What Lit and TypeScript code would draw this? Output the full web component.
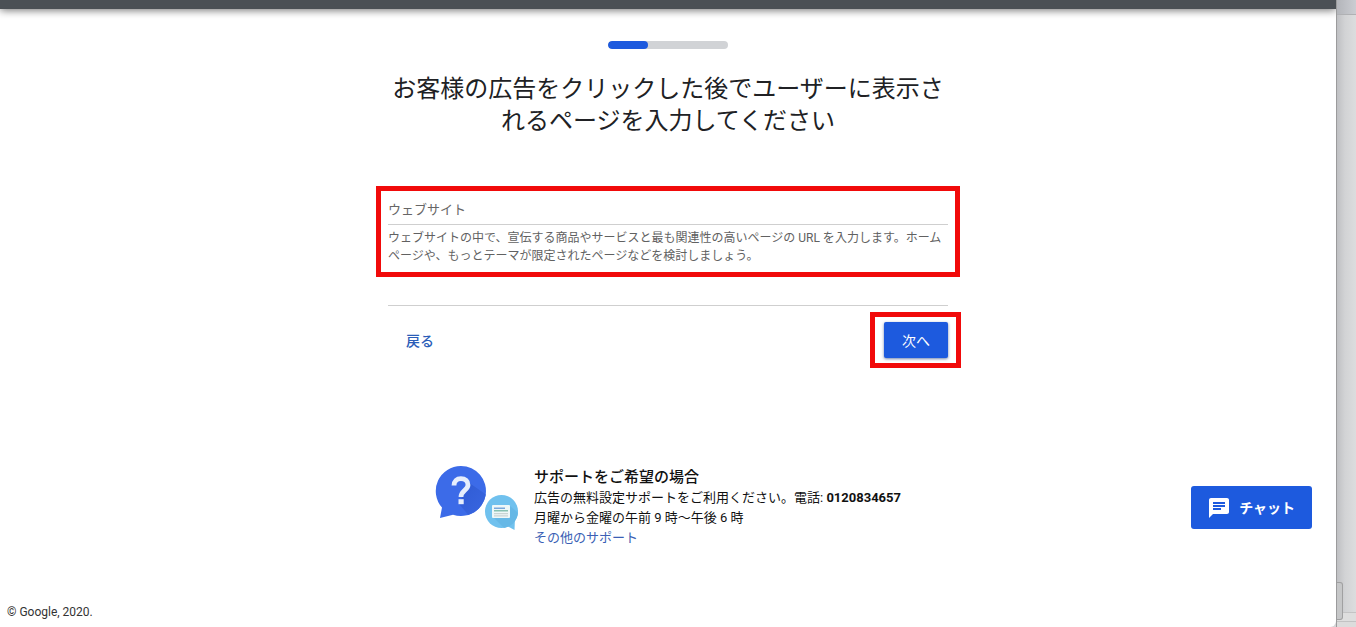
import { LitElement, html, css } from "lit";
import { customElement, property } from "lit/decorators.js";

@customElement("step-progress")
class StepProgress extends LitElement {
  @property({ type: Number }) value = 0;

  static styles = css`
    :host {
      display: block;
      width: 120px;
    }
    .track {
      height: 8px;
      border-radius: 4px;
      background: #d1d3d6;
      overflow: hidden;
    }
    .fill {
      height: 100%;
      border-radius: 4px;
      background: #1d5ade;
    }
  `;

  render() {
    return html`<div
      class="track"
      role="progressbar"
      aria-label="進行状況"
      aria-valuemin="0"
      aria-valuemax="100"
      aria-valuenow=${this.value}
    >
      <div class="fill" style="width:${this.value}%"></div>
    </div>`;
  }
}

@customElement("support-panel")
class SupportPanel extends LitElement {
  static styles = css`
    :host {
      display: flex;
      gap: 15px;
      color: #111;
    }
    .art {
      flex: none;
      width: 84px;
      height: 66px;
    }
    .title {
      margin: 0;
      padding-top: 1px;
      font-size: 15px;
      line-height: 22px;
      font-weight: 500;
    }
    .line {
      margin: 0;
      font-size: 13px;
      line-height: 20px;
    }
    .phone {
      font-weight: 700;
    }
    .more {
      color: #3b5fb5;
      text-decoration: none;
    }
  `;

  render() {
    return html`
      <svg class="art" viewBox="0 0 84 66" aria-hidden="true">
        <defs>
          <linearGradient id="shade" x1="0" y1="0" x2="1" y2="1">
            <stop offset="0" stop-color="#2f5bd3" />
            <stop offset="1" stop-color="#3a67e2" />
          </linearGradient>
          <clipPath id="big">
            <circle cx="26" cy="26" r="25" />
          </clipPath>
          <clipPath id="small">
            <circle cx="66.500" cy="46.500" r="16.500" />
          </clipPath>
        </defs>
        <path d="M26 1a25 25 0 1 1-8 48.700L5 53 7 42.500A25 25 0 0 1 26 1z" fill="#3c6be8" />
        <path d="M33 17l20 14v22H36L24 39l4-9z" fill="url(#shade)" clip-path="url(#big)" />
        <path
          d="M19 20.500c0-4.400 2.800-6.900 6.900-6.900 4.300 0 7.100 2.500 7.100 6.300 0 5.200-7 5.800-7 12.100"
          fill="none"
          stroke="#e6eefc"
          stroke-width="4.800"
        />
        <rect x="23.500" y="34.200" width="5.200" height="5" fill="#e6eefc" />
        <circle cx="66.500" cy="46.500" r="16.500" fill="#70c1ee" />
        <path d="M71 60.500l9-7.500-.5 12z" fill="#70c1ee" />
        <path d="M75 41l12 10v14H71L59 53z" fill="#66b8e6" clip-path="url(#small)" />
        <rect x="57" y="40" width="18" height="13" rx="1" fill="#eef7f8" />
        <path d="M59 43.200h11" stroke="#5b94d3" stroke-width="1.200" />
        <path d="M59 45.800h14" stroke="#6db3a0" stroke-width="1.200" />
        <path d="M59 48.600h14M59 50.800h14" stroke="#c9d4d3" stroke-width="1.200" />
      </svg>
      <div>
        <h2 class="title">サポートをご希望の場合</h2>
        <p class="line">
          広告の無料設定サポートをご利用ください。電話: <span class="phone">0120834657</span>
        </p>
        <p class="line">月曜から金曜の午前 9 時～午後 6 時</p>
        <p class="line"><a class="more" href="#support">その他のサポート</a></p>
      </div>
    `;
  }
}

@customElement("app-root")
class AppRoot extends LitElement {
  static styles = css`
    :host {
      display: grid;
      grid-template-columns: minmax(0, 1fr) 20px;
      min-height: 100vh;
      font-family: Roboto, "Noto Sans CJK JP", sans-serif;
      background: #d5d6d8;
    }
    * {
      box-sizing: border-box;
    }
    .window {
      position: relative;
      display: flex;
      flex-direction: column;
      background: #fff;
      border-bottom-right-radius: 6px;
      overflow: hidden;
    }
    .bar {
      height: 9px;
      background: #4b5055;
      box-shadow: 0 1px 8px rgba(0, 0, 0, 0.6);
    }
    .page {
      flex: 1;
      display: flex;
      flex-direction: column;
      align-items: center;
      padding-top: 32px;
    }
    .form {
      width: 100%;
      max-width: 560px;
    }
    .heading {
      margin: 24px 0 61px;
      font-size: 24px;
      line-height: 32px;
      font-weight: 400;
      text-align: center;
      color: #202124;
    }
    .field {
      color: #5f6368;
      outline: 5px solid #f10a0a;
      outline-offset: 7px;
    }
    .input {
      display: block;
      width: 100%;
      height: 27px;
      padding: 0 0 3px;
      border: 0;
      border-bottom: 1px solid #cfcfcf;
      background: none;
      font: 13px/20px Roboto, "Noto Sans CJK JP", sans-serif;
      color: inherit;
    }
    .input::placeholder {
      color: #666;
      opacity: 1;
    }
    .hint {
      margin: 4px 0 0;
      font-size: 12px;
      line-height: 18px;
      color: #616161;
    }
    .actions {
      display: flex;
      justify-content: space-between;
      margin-top: 40px;
      padding-top: 16px;
      border-top: 1px solid #cfcfcf;
    }
    .btn {
      min-width: 64px;
      height: 36px;
      padding: 2px 16px 0;
      border: 0;
      border-radius: 2px;
      background: none;
      font: 500 14px/20px Roboto, "Noto Sans CJK JP", sans-serif;
      color: #2a5db8;
    }
    .primary {
      background: #1d5ade;
      color: #fff;
      font-weight: 400;
      box-shadow: 0 1px 3px rgba(20, 50, 120, 0.6);
    }
    .marked {
      position: relative;
    }
    .marked::after {
      content: "";
      position: absolute;
      inset: -10px -13px -10px -14px;
      border: 5px solid #f10a0a;
      pointer-events: none;
    }
    .support {
      margin-top: 107px;
    }
    .footer {
      padding: 6px 7px;
      font-size: 12px;
      line-height: 18px;
      color: #333;
    }
    .chat {
      position: absolute;
      right: 24px;
      bottom: 98px;
      display: flex;
      align-items: center;
      gap: 8px;
      height: 43px;
      padding: 0 17px 0 16px;
      border: 0;
      border-radius: 3px;
      background: #1d5ade;
      color: #fff;
      font: 700 14px/20px Roboto, "Noto Sans CJK JP", sans-serif;
    }
    .chat-icon {
      width: 24px;
      height: 24px;
      fill: currentColor;
    }
    .desktop {
      display: flex;
      flex-direction: column;
      justify-content: space-between;
      border-left: 1px solid #9b9b9c;
      background: linear-gradient(90deg, #bfc0c3, #d2d3d5 8px, #dcddde);
    }
    .desktop-top {
      height: 15px;
      border-bottom: 1px solid #b0b1b4;
      background: linear-gradient(90deg, #b3b5ba, #cbcdd2);
    }
    .desktop-bottom {
      height: 45px;
      background: linear-gradient(transparent 30px, #a9a9aa 30px, #dedede 31px, #dedede 39px, #a9a9aa 39px, #dcdcdc 40px);
    }
    .desktop-tab {
      width: 6px;
      height: 38px;
      border: 1px solid #a0a0a1;
      border-left: 0;
      border-radius: 0 3px 3px 0;
      background: #c6c7c8;
    }
  `;

  render() {
    return html`
      <div class="window">
        <div class="bar"></div>
        <main class="page">
          <step-progress .value=${33}></step-progress>
          <form class="form" @submit=${(e: Event) => e.preventDefault()}>
            <h1 class="heading">お客様の広告をクリックした後でユーザーに表示されるページを入力してください</h1>
            <div class="field">
              <input
                class="input"
                type="text"
                aria-label="ウェブサイト"
                aria-describedby="hint"
                placeholder="ウェブサイト"
              />
              <p class="hint" id="hint">
                ウェブサイトの中で、宣伝する商品やサービスと最も関連性の高いページの URL を入力します。ホームページや、もっとテーマが限定されたページなどを検討しましょう。
              </p>
            </div>
            <div class="actions">
              <button class="btn" type="button">戻る</button>
              <div class="marked">
                <button class="btn primary" type="submit">次へ</button>
              </div>
            </div>
          </form>
          <support-panel class="support"></support-panel>
        </main>
        <footer class="footer">© Google, 2020.</footer>
        <button class="chat" type="button">
          <svg class="chat-icon" viewBox="0 0 24 24" aria-hidden="true">
            <path
              d="M20 2H4c-1.100 0-1.990.9-1.990 2L2 22l4-4h14c1.100 0 2-.9 2-2V4c0-1.100-.9-2-2-2zM6 9h12v2H6V9zm8 5H6v-2h8v2zm4-6H6V6h12v2z"
            />
          </svg>
          チャット
        </button>
      </div>
      <div class="desktop" aria-hidden="true">
        <div class="desktop-top"></div>
        <div class="desktop-bottom"><div class="desktop-tab"></div></div>
      </div>
    `;
  }
}
